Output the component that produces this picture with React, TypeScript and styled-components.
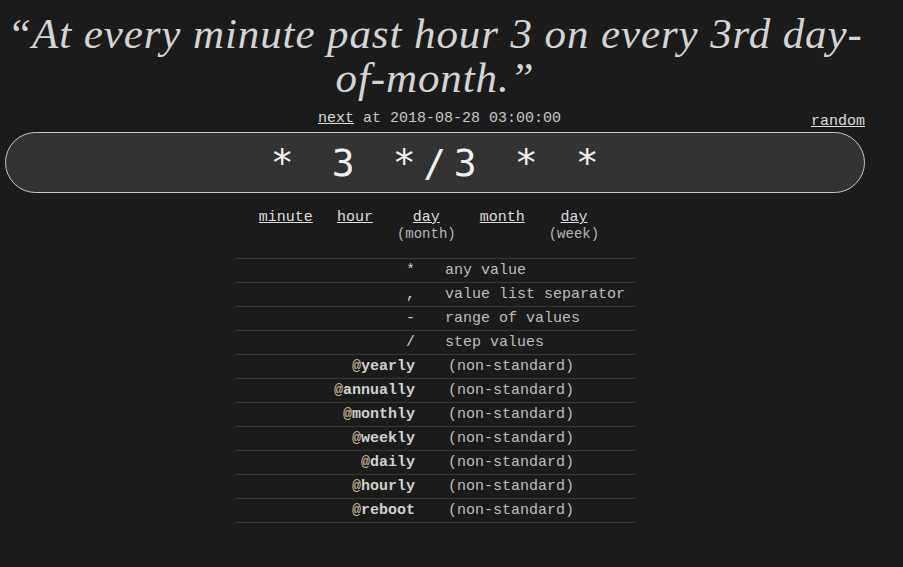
import styled, { createGlobalStyle } from "styled-components"

const GlobalStyle = createGlobalStyle`
  html, body {
    margin: 0;
    padding: 0;
    background: #1b1b1b;
    color: #c8c8c8;
    font-family: "Liberation Mono", "Courier New", monospace;
  }
`

const Page = styled.div`
  width: 860px;
  margin-left: 5px;
  padding-top: 12px;
`

const Title = styled.h1`
  margin: 0;
  font-family: "Liberation Serif", Georgia, serif;
  font-style: italic;
  font-weight: normal;
  font-size: 43px;
  line-height: 44px;
  color: #d4d4d4;
  text-align: center;
  letter-spacing: 0.9px;
`

const NextRow = styled.div`
  display: grid;
  grid-template-columns: 1fr auto 1fr;
  align-items: end;
  margin-top: 10px;
  font-size: 15px;
  line-height: 17px;
`

const NextText = styled.div`
  grid-column: 2;
  padding-left: 9px;
  color: #c8c8c8;
`

const Link = styled.a`
  color: #dcdcdc;
  text-decoration: underline;
  cursor: pointer;
`

const RandomLink = styled(Link)`
  grid-column: 3;
  justify-self: end;
  position: relative;
  top: 3px;
`

const CronInput = styled.div`
  margin-top: 5px;
  height: 59px;
  border: 1px solid #c8c8c8;
  border-radius: 31px;
  background: #333333;
  color: #f2f2f2;
  display: flex;
  align-items: center;
  justify-content: center;
  font-family: "DejaVu Sans Mono", monospace;
  font-size: 38px;
  letter-spacing: 7.6px;
  padding-left: 7px;
  white-space: pre;
`

const Parts = styled.div`
  display: flex;
  justify-content: center;
  gap: 24px;
  margin-top: 16px;
  margin-right: 12px;
  font-size: 15px;
  line-height: 17px;
`

const Part = styled.div`
  text-align: center;
  display: flex;
  flex-direction: column;
`

const Sub = styled.span`
  font-size: 14px;
  color: #b8b8b8;
`

const Table = styled.div`
  width: 400px;
  margin: 15px auto 0;
  display: grid;
  grid-template-columns: 180px 1fr;
  column-gap: 30px;
  font-size: 15px;
  border-bottom: 1px solid #383838;
`

const Cell = styled.div<{ $key?: boolean; $plain?: boolean }>`
  height: 23px;
  line-height: 23px;
  border-top: 1px solid #383838;
  text-align: ${(p) => (p.$key ? "right" : "left")};
  color: ${(p) => (p.$key ? "#d0d0d0" : "#bdbdbd")};
  font-weight: ${(p) => (p.$key && !p.$plain ? "bold" : "normal")};
  margin-right: ${(p) => (p.$key ? "-30px" : "0")};
  padding-right: ${(p) => (p.$key ? "30px" : "0")};
`

const Note = styled.span`
  padding-left: 3px;
`

const At = styled.span`
  color: #c8b48c;
`

const symbols = [
  ["*", "any value"],
  [",", "value list separator"],
  ["-", "range of values"],
  ["/", "step values"],
]

const macros = ["yearly", "annually", "monthly", "weekly", "daily", "hourly", "reboot"]

export default function App() {
  return (
    <>
      <GlobalStyle />
      <Page>
        <Title>“At every minute past hour 3 on every 3rd day-of-month.”</Title>
        <NextRow>
          <NextText>
            <Link>next</Link> at 2018-08-28 03:00:00
          </NextText>
          <RandomLink>random</RandomLink>
        </NextRow>
        <CronInput>* 3 */3 * *</CronInput>
        <Parts>
          <Part><Link>minute</Link></Part>
          <Part><Link>hour</Link></Part>
          <Part>
            <Link>day</Link>
            <Sub>(month)</Sub>
          </Part>
          <Part><Link>month</Link></Part>
          <Part>
            <Link>day</Link>
            <Sub>(week)</Sub>
          </Part>
        </Parts>
        <Table>
          {symbols.map(([sym, desc]) => [
            <Cell $key $plain key={sym}>{sym}</Cell>,
            <Cell key={sym + "-d"}>{desc}</Cell>,
          ])}
          {macros.map((m) => [
            <Cell $key key={m}>
              <At>@</At>
              {m}
            </Cell>,
            <Cell key={m + "-d"}>
              <Note>(non-standard)</Note>
            </Cell>,
          ])}
        </Table>
      </Page>
    </>
  )
}
